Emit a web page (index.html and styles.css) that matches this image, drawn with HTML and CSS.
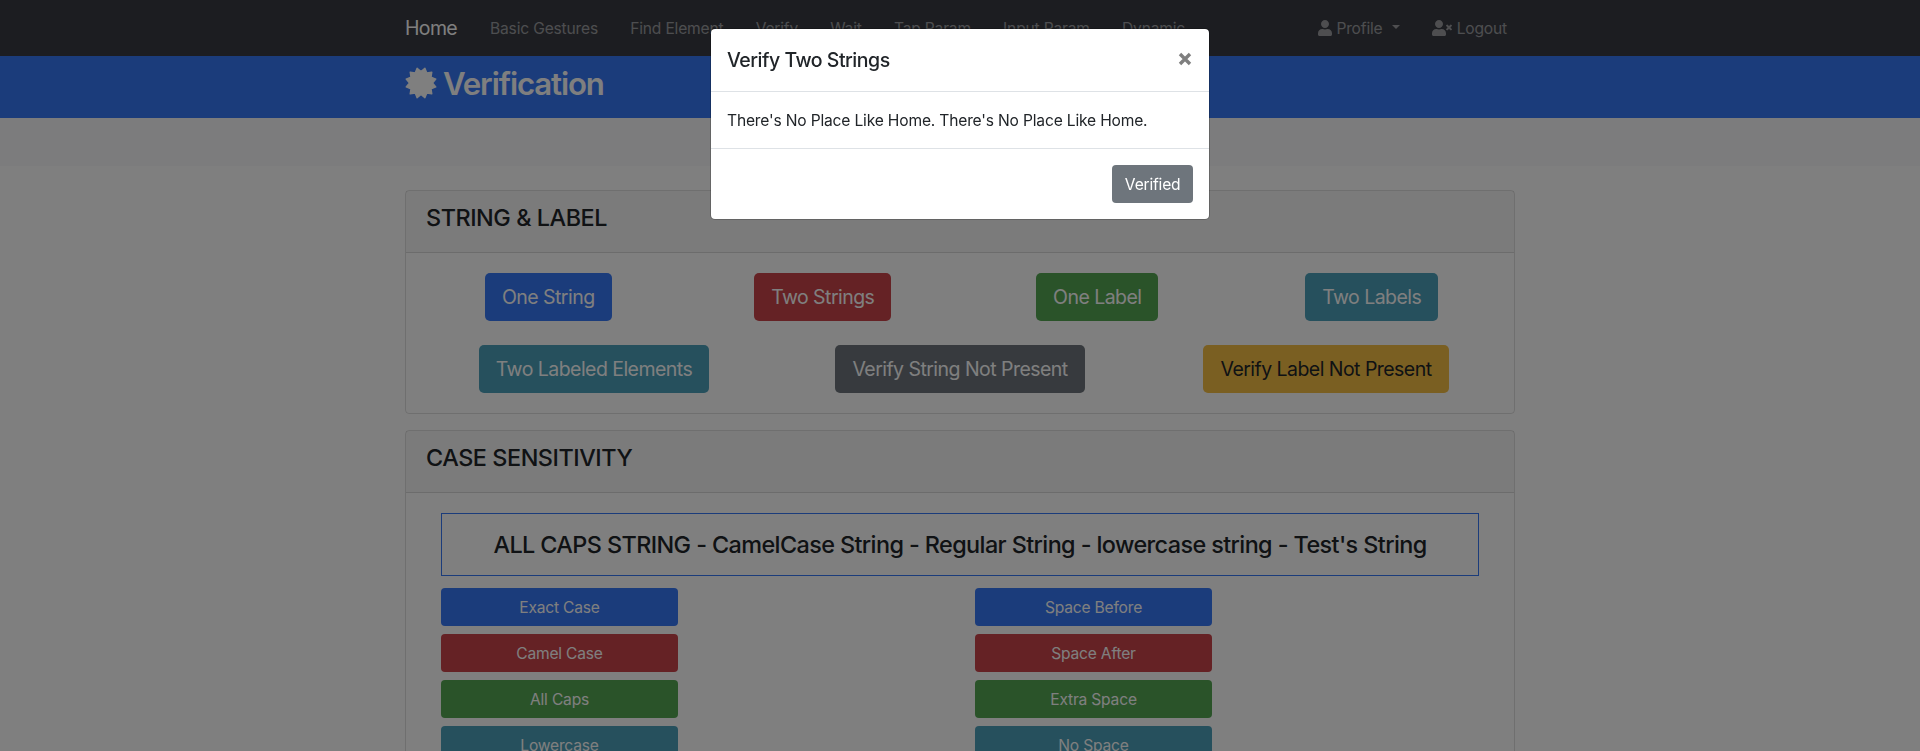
FILE: index.html
```
<!DOCTYPE html>
<html lang="en">
<head>
<meta charset="utf-8">
<title>Verification</title>
<link rel="stylesheet" href="styles.css">
</head>
<body class="modal-open">
<nav class="navbar">
  <div class="container navbar-inner">
    <a class="brand">Home</a>
    <ul class="nav">
      <li><span>Basic Gestures</span></li>
      <li><span>Find Element</span></li>
      <li><span>Verify</span></li>
      <li><span>Wait</span></li>
      <li><span>Tap Param</span></li>
      <li><span>Input Param</span></li>
      <li><span>Dynamic</span></li>
    </ul>
    <ul class="nav nav-right">
      <li><svg class="icon-user" viewBox="0 0 448 512"><path d="M224 256c70.7 0 128-57.3 128-128S294.7 0 224 0 96 57.3 96 128s57.3 128 128 128zm89.6 32h-16.7c-22.2 10.2-46.9 16-72.9 16s-50.6-5.8-72.9-16h-16.7C60.2 288 0 348.2 0 422.4V464c0 26.5 21.5 48 48 48h352c26.5 0 48-21.5 48-48v-41.6c0-74.2-60.2-134.4-134.4-134.4z"/></svg><span>Profile</span><i class="caret"></i></li>
      <li><svg class="icon-logout" viewBox="0 0 640 512"><path d="M224 256c70.7 0 128-57.3 128-128S294.7 0 224 0 96 57.3 96 128s57.3 128 128 128zm89.6 32h-16.7c-22.2 10.2-46.9 16-72.9 16s-50.6-5.8-72.9-16h-16.7C60.2 288 0 348.2 0 422.4V464c0 26.5 21.5 48 48 48h352c26.5 0 48-21.5 48-48v-41.6c0-74.2-60.2-134.4-134.4-134.4z"/><path d="M589.6 240l45.6-45.6c6.3-6.3 6.3-16.5 0-22.8l-22.8-22.8c-6.3-6.3-16.5-6.3-22.8 0L544 194.4l-45.6-45.6c-6.3-6.3-16.5-6.3-22.8 0l-22.8 22.8c-6.3 6.3-6.3 16.5 0 22.8l45.6 45.6-45.6 45.6c-6.3 6.3-6.3 16.5 0 22.8l22.8 22.8c6.3 6.3 16.5 6.3 22.8 0l45.6-45.6 45.6 45.6c6.3 6.3 16.5 6.3 22.8 0l22.8-22.8c6.3-6.3 6.3-16.5 0-22.8L589.6 240z"/></svg><span>Logout</span></li>
    </ul>
  </div>
</nav>
<header class="page-header">
  <div class="container">
    <h1><svg class="icon-badge" viewBox="-16 -16 32 32"><path d="M-3.9 -14.8L0 -11.5 3.9 -14.8 5.8 -10 10.8 -10.8 10 -5.8 14.8 -3.9 11.5 0 14.8 3.9 10 5.8 10.8 10.8 5.8 10 3.9 14.8 0 11.5 -3.9 14.8 -5.8 10 -10.8 10.8 -10 5.8 -14.8 3.9 -11.5 0 -14.8 -3.9 -10 -5.8 -10.8 -10.8 -5.8 -10Z"/></svg><span>Verification</span></h1>
  </div>
</header>
<section class="actions"></section>
<main class="container">
  <section class="card">
    <div class="card-header"><h4>STRING &amp; LABEL</h4></div>
    <div class="card-body">
      <div class="row four">
        <button class="btn btn-lg primary">One String</button>
        <button class="btn btn-lg danger">Two Strings</button>
        <button class="btn btn-lg success">One Label</button>
        <button class="btn btn-lg info">Two Labels</button>
      </div>
      <div class="row three">
        <button class="btn btn-lg info">Two Labeled Elements</button>
        <button class="btn btn-lg secondary">Verify String Not Present</button>
        <button class="btn btn-lg warning">Verify Label Not Present</button>
      </div>
    </div>
  </section>
  <section class="card">
    <div class="card-header"><h4>CASE SENSITIVITY</h4></div>
    <div class="card-body case-body">
      <div class="sample"><h4>ALL CAPS STRING - CamelCase String - Regular String - lowercase string - Test's String</h4></div>
      <div class="columns">
        <div class="stack">
          <button class="btn primary">Exact Case</button>
          <button class="btn danger">Camel Case</button>
          <button class="btn success">All Caps</button>
          <button class="btn info">Lowercase</button>
        </div>
        <div class="stack">
          <button class="btn primary">Space Before</button>
          <button class="btn danger">Space After</button>
          <button class="btn success">Extra Space</button>
          <button class="btn info">No Space</button>
        </div>
      </div>
    </div>
  </section>
</main>
<div class="backdrop">
  <div class="modal">
    <div class="modal-header">
      <h5>Verify Two Strings</h5>
      <svg class="icon-close" viewBox="0 0 14 14"><path d="M2 2L12 12M12 2L2 12"/></svg>
    </div>
    <div class="modal-body">There's No Place Like Home. There's No Place Like Home.</div>
    <div class="modal-footer"><button class="btn secondary">Verified</button></div>
  </div>
</div>
</body>
</html>
```
FILE: styles.css
```
* { box-sizing: border-box; }

html { height: 100%; overflow: hidden; }
body {
  margin: 0;
  background: #fff;
  color: #212529;
  font: 400 15.6px/24px Inter, "Liberation Sans", sans-serif;
  letter-spacing: -0.18px;
}
.modal-open { height: 100%; overflow: hidden; }

h1, h4, h5 { margin: 0; font-weight: 500; }
h4 { padding-top: 1px; font-size: 23.4px; line-height: 28.8px; letter-spacing: -0.59px; }
.card-header h4 { letter-spacing: -0.45px; }
h5 { font-size: 19.5px; line-height: 30px; letter-spacing: -0.48px; }

.container { width: 1140px; margin: 0 auto; padding: 0 15px; }

.navbar { height: 56px; background: #383a42; }
.navbar-inner { display: flex; align-items: center; height: 56px; }
.brand {
  width: 69px;
  color: #fff;
  font-size: 19.5px;
  line-height: 30px;
  letter-spacing: -0.65px;
}
.nav {
  display: flex;
  gap: 32.2px;
  margin: 0;
  padding: 0 0 0 16px;
  list-style: none;
  color: rgba(255, 255, 255, .5);
}
.nav li { display: flex; align-items: center; white-space: nowrap; }
.nav span { padding-top: 1px; }
.nav svg { height: 16px; fill: currentColor; }
.nav-right { margin-left: auto; padding-right: 8px; }
.icon-user { width: 14px; margin-right: 4px; }
.icon-logout { width: 20px; margin-right: 4.5px; }
.caret {
  margin: -2px 0 0 9.5px;
  border: 4.8px solid transparent;
  border-top-color: currentColor;
  border-bottom: 0;
}

.page-header { height: 62px; padding-top: 8px; background: #3678f6; color: #fff; }
.page-header h1 {
  display: flex;
  align-items: center;
  gap: 6px;
  height: 38px;
  font-size: 31.2px;
  font-weight: 600;
  line-height: 38px;
  letter-spacing: -1.12px;
}
.page-header span { padding-top: 2px; }
.icon-badge { width: 32px; height: 32px; fill: #fff; stroke: #fff; stroke-width: 1.4; stroke-linejoin: round; }

.actions { height: 48px; margin-bottom: 24px; background: #f8f9fa; }

.card { margin-bottom: 16px; border: 1px solid rgba(0, 0, 0, .125); border-radius: 4px; }
.card-header {
  height: 62px;
  padding: 12px 20px;
  border-bottom: 1px solid rgba(0, 0, 0, .125);
  background: rgba(0, 0, 0, .03);
}
.card-body { display: grid; gap: 24px; padding: 20px 5px; }
.row { display: grid; justify-items: center; }
.four { grid-template-columns: repeat(4, 1fr); }
.three { grid-template-columns: repeat(3, 1fr); }

.btn {
  height: 38px;
  padding: 1px 12.6px 0;
  border: 0;
  border-radius: 4px;
  color: #fff;
  font: inherit;
  letter-spacing: -0.2px;
}
.btn-lg { height: 48px; padding: 0 17px; border-radius: 5px; font-size: 19.5px; letter-spacing: -0.54px; }
.primary { background: #3678f6; }
.danger { background: #cb444a; }
.success { background: #54a653; }
.info { background: #4ca0ba; }
.secondary { background: #6e757c; }
.warning { background: #f5be45; color: #212529; }

.case-body { gap: 12px; padding: 20px 35px; }
.sample { height: 63px; padding-top: 16px; border: 1px solid #3678f6; text-align: center; }
.columns { display: grid; grid-template-columns: 1fr 1fr; gap: 30px; }
.stack { display: grid; grid-auto-rows: 38px; gap: 8px; width: 237px; }

.backdrop { position: fixed; inset: 0; padding-top: 28px; background: rgba(0, 0, 0, .5); }
.modal {
  width: 500px;
  margin: 0 auto;
  border: 1px solid rgba(0, 0, 0, .2);
  border-radius: 5px;
  background: #fff;
  background-clip: padding-box;
}
.modal-header {
  display: flex;
  justify-content: space-between;
  height: 63px;
  padding: 16px;
  border-bottom: 1px solid #dee2e6;
}
.icon-close { width: 14px; height: 14px; margin: 7px 1px 0 0; fill: none; stroke: #7f7f7f; stroke-width: 3.4; }
.modal-body { padding: 17px 16px 15px; }
.modal-footer { display: flex; justify-content: flex-end; padding: 16px; border-top: 1px solid #dee2e6; }
```
